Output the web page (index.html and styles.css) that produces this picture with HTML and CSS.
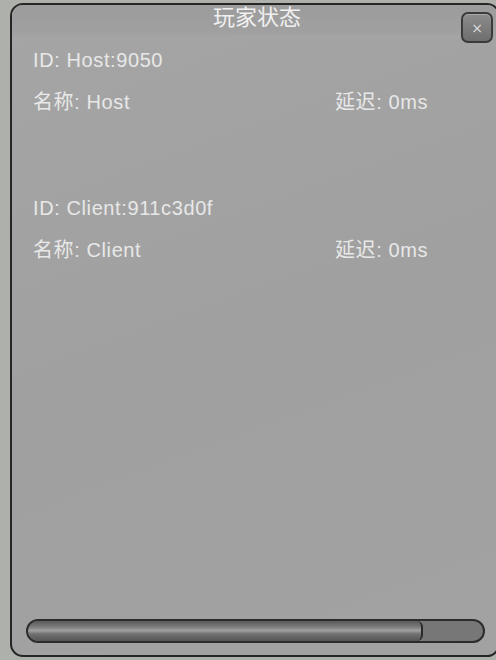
FILE: index.html
```html
<!DOCTYPE html>
<html lang="zh">
<head>
  <meta charset="UTF-8">
  <title>玩家状态</title>
  <link rel="stylesheet" href="styles.css">
</head>
<body>
  <!-- Player status window -->
  <div class="panel">
    <div class="panel-header">
      <span class="panel-title">玩家状态</span>
    </div>
    <button class="close-btn">×</button>

    <div class="player-list">
      <div class="player">
        <div class="player-row">ID: Host:9050</div>
        <div class="player-row">
          <span>名称: Host</span>
          <span>延迟: 0ms</span>
        </div>
      </div>
      <div class="player">
        <div class="player-row">ID: Client:911c3d0f</div>
        <div class="player-row">
          <span>名称: Client</span>
          <span>延迟: 0ms</span>
        </div>
      </div>
    </div>

    <div class="scrollbar">
      <div class="scroll-thumb"></div>
    </div>
  </div>
</body>
</html>
```

FILE: styles.css
```css
body {
  margin: 0;
  background: #aeb0ac;
  font-family: "Liberation Sans", "Noto Sans CJK SC", sans-serif;
  overflow: hidden;
  height: 660px;
}
.panel {
  position: relative;
  box-sizing: border-box;
  width: 490px;
  height: 654px;
  margin: 3px 0 0 10px;
  border: 2px solid #262626;
  border-radius: 13px;
  background: linear-gradient(160deg, #a5a5a5 0%, #a0a0a0 50%, #a2a2a2 100%);
  display: flex;
  flex-direction: column;
}
/* Title bar */
.panel-header {
  height: 34px;
  text-align: center;
  padding-left: 4px;
  background: linear-gradient(#9c9c9c, #a0a0a0 80%, #a6a6a6);
  border-radius: 11px 11px 0 0;
}
.panel-title {
  display: inline-block;
  font-size: 22px;
  line-height: 26px;
  color: #f0f0f0;
}
.close-btn {
  position: absolute;
  top: 7px;
  right: 5px;
  width: 32px;
  height: 31px;
  padding: 0;
  border: 2px solid #3a3a3a;
  border-radius: 7px;
  background: linear-gradient(#8c8c8c, #6e6e6e);
  color: #dcdcdc;
  font-family: "DejaVu Sans", sans-serif;
  font-size: 14px;
  line-height: 26px;
  box-shadow: inset 0 1px 0 rgba(255, 255, 255, 0.25);
}
.player-list {
  flex: 1;
  padding-left: 21px;
}
.player {
  margin-bottom: 64px;
}
.player-row {
  display: grid;
  grid-template-columns: 302px auto;
  height: 42px;
  line-height: 42px;
  font-size: 20px;
  letter-spacing: 0.6px;
  color: #e8e8e8;
}
/* Horizontal scrollbar */
.scrollbar {
  box-sizing: border-box;
  height: 24px;
  margin: 0 13px 12px 14px;
  border: 2px solid #2c2c2c;
  border-radius: 12px;
  background: #777;
  overflow: hidden;
}
.scroll-thumb {
  box-sizing: border-box;
  width: 395px;
  height: 100%;
  border-right: 2px solid #2a2a2a;
  border-radius: 10px 6px 6px 10px;
  background: linear-gradient(#5a5a5a 0%, #7c7c7c 30%, #a0a0a0 48%, #707070 65%, #555 100%);
}
```
